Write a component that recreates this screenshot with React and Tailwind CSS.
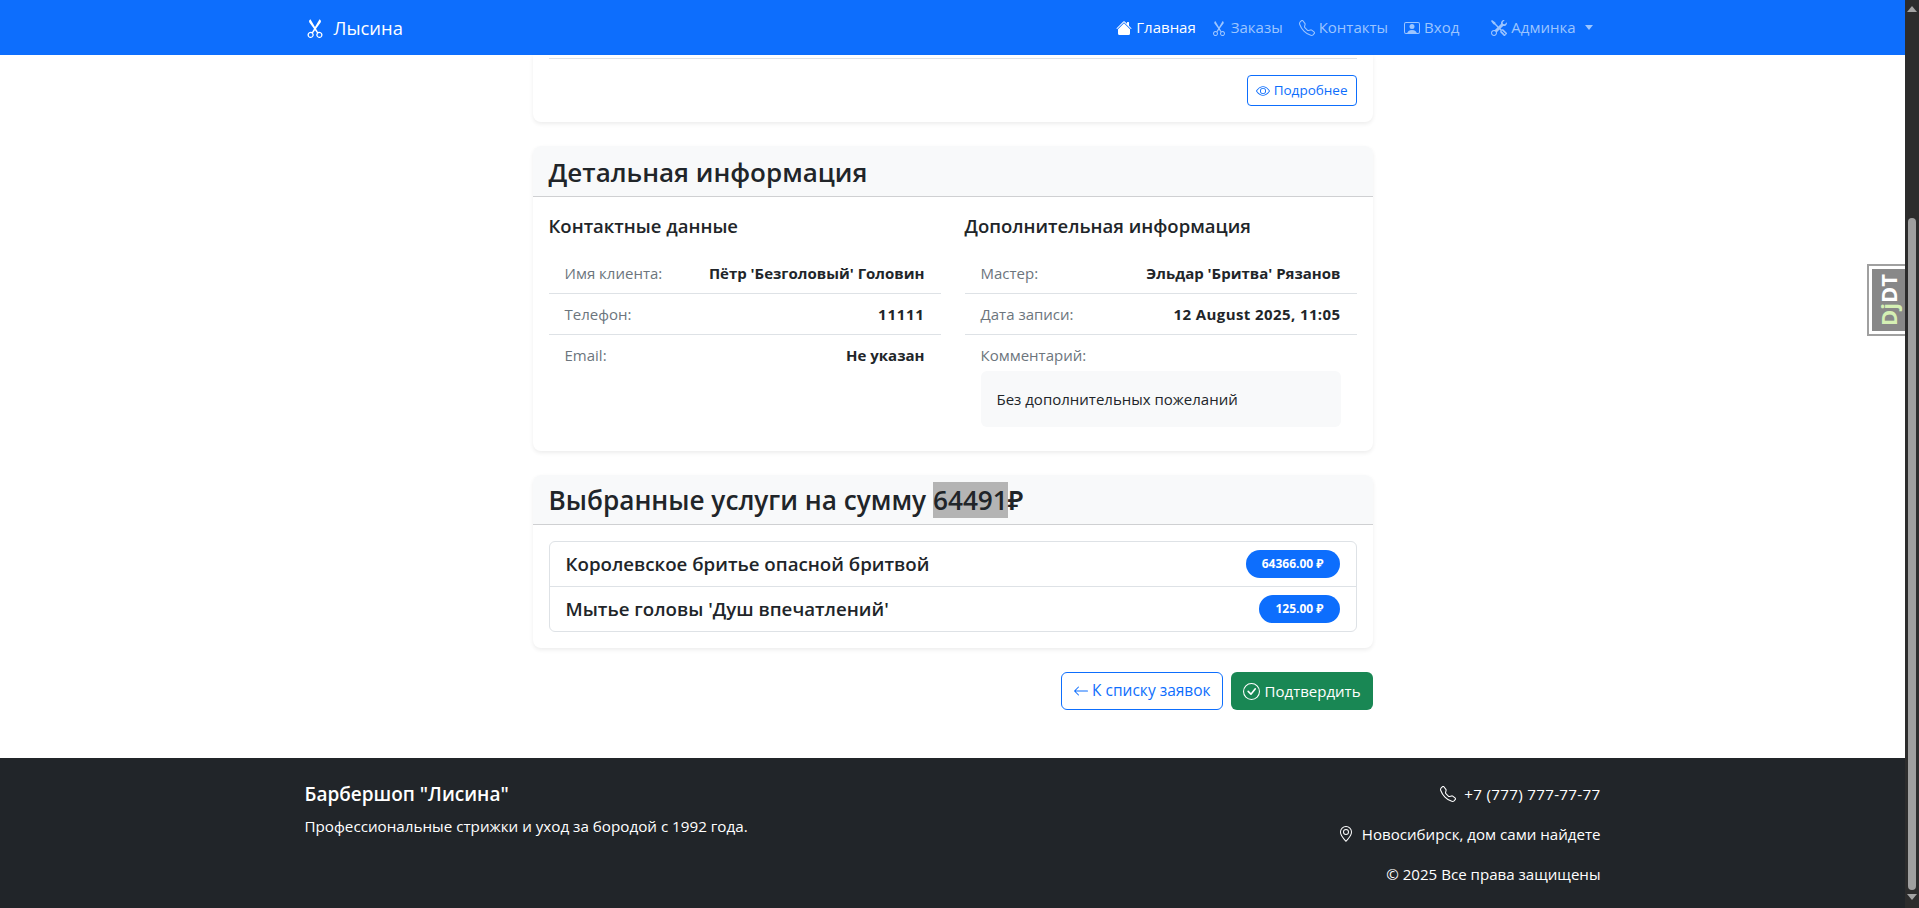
import React from 'react';
import { BsScissors, BsHouseFill, BsTelephone, BsPersonVideo, BsTools, BsEye, BsArrowLeft, BsCheckCircle, BsGeoAlt } from 'react-icons/bs';

const font = { fontFamily: '"Open Sans", "Noto Sans", sans-serif' };

function NavItem({ icon: Icon, label, active, className = '' }) {
  return (
    <a className={`flex items-center gap-1 px-2 text-[15px] ${active ? 'text-white' : 'text-[#9cc5ff]'} ${className}`}>
      <Icon className="w-4 h-4 shrink-0" />
      <span>{label}</span>
    </a>
  );
}

function InfoRow({ label, value, valueClass = '' }) {
  return (
    <div className="flex justify-between items-center px-4 py-2 border-b border-[#dee2e6] last:border-b-0 text-[15px] leading-6">
      <span className="text-[#6c757d]">{label}</span>
      <strong className={`font-bold text-[#212529] ${valueClass}`}>{value}</strong>
    </div>
  );
}

function ServiceRow({ name, price }) {
  return (
    <div className="flex justify-between items-center px-4 py-2 border-b border-[#dee2e6] last:border-b-0">
      <h5 className="text-[18.7px] leading-6 font-semibold text-[#212529]">{name}</h5>
      <span className="h-7 flex items-center px-4 rounded-full bg-[#0d6efd] text-white text-xs font-bold">{price}</span>
    </div>
  );
}

function Card({ title, headerClass, titleClass, children }) {
  return (
    <section className="rounded-lg bg-white shadow-[0_2px_4px_rgba(0,0,0,0.075)]">
      <div className={`${headerClass} px-4 flex items-center bg-[#f8f9fa] border-b border-[#cfd0d2] rounded-t-lg`}>
        <h3 className={`${titleClass} leading-9 font-semibold text-[#212529]`}>{title}</h3>
      </div>
      {children}
    </section>
  );
}

export default function App() {
  return (
    <div className="relative h-screen flex overflow-hidden bg-white text-[#212529]" style={font}>
      <div className="flex-1 min-w-0 flex flex-col">
        <nav className="h-[55px] shrink-0 bg-[#0d6efd]">
          <div className="w-[1296px] h-full mx-auto flex items-center justify-between">
            <a className="flex items-center gap-[9px] text-white text-[18.4px] pt-px">
              <BsScissors className="w-5 h-5" />
              <span>Лысина</span>
            </a>
            <div className="flex items-center">
              <NavItem icon={BsHouseFill} label="Главная" active className="!pr-[7px]" />
              <NavItem icon={BsScissors} label="Заказы" />
              <NavItem icon={BsTelephone} label="Контакты" />
              <NavItem icon={BsPersonVideo} label="Вход" />
              <div className="ml-4 flex items-center px-2 text-[#9cc5ff]">
                <NavItem icon={BsTools} label="Админка" className="!px-0" />
                <span className="ml-[9px] w-0 h-0 border-x-[4px] border-x-transparent border-t-[5px] border-t-[#9cc5ff]"></span>
              </div>
            </div>
          </div>
        </nav>

        <main className="flex-1 w-[840px] mx-auto">
          <section className="h-[67px] rounded-b-lg bg-white shadow-[0_2px_4px_rgba(0,0,0,0.075)] px-4 pt-[3px]">
            <div className="h-px bg-[#dee2e6]"></div>
            <div className="flex justify-end pt-4">
              <a className="h-[31px] px-2 flex items-center gap-1 rounded border border-[#0d6efd] text-[#0d6efd] text-[13.5px]">
                <BsEye className="w-[14px] h-[14px]" />
                Подробнее
              </a>
            </div>
          </section>

          <div className="mt-6">
            <Card title="Детальная информация" headerClass="h-[51px] pt-[2px]" titleClass="text-[26px]">
              <div className="grid grid-cols-2 gap-6 p-4">
                <div>
                  <h5 className="text-[18.5px] leading-6 font-semibold pt-px mb-[15px]">Контактные данные</h5>
                  <InfoRow label="Имя клиента:" value="Пётр 'Безголовый' Головин" />
                  <InfoRow label="Телефон:" value="11111" valueClass="tracking-[0.7px]" />
                  <InfoRow label="Email:" value="Не указан" />
                </div>
                <div>
                  <h5 className="text-[18.5px] leading-6 font-semibold pt-px mb-[15px]">Дополнительная информация</h5>
                  <InfoRow label="Мастер:" value="Эльдар 'Бритва' Рязанов" />
                  <InfoRow label="Дата записи:" value="12 August 2025, 11:05" valueClass="tracking-[0.4px]" />
                  <div className="px-4 py-2 text-[15px] leading-6">
                    <span className="text-[#6c757d]">Комментарий:</span>
                    <div className="mt-1 p-4 rounded-md bg-[#f8f9fa]">Без дополнительных пожеланий</div>
                  </div>
                </div>
              </div>
            </Card>
          </div>

          <div className="mt-6">
            <Card title={<>Выбранные услуги на сумму <span className="bg-[#b4b4b4]">64491</span>₽</>} headerClass="h-[50px] pt-px" titleClass="text-[26.2px]">
              <div className="p-4">
                <div className="rounded-md border border-[#dee2e6]">
                  <ServiceRow name="Королевское бритье опасной бритвой" price="64366.00 ₽" />
                  <ServiceRow name="Мытье головы 'Душ впечатлений'" price="125.00 ₽" />
                </div>
              </div>
            </Card>
          </div>

          <div className="mt-6 flex justify-end gap-2">
            <a className="h-[38px] px-[11px] flex items-center gap-[3px] rounded-md border border-[#0d6efd] text-[#0d6efd] text-[15.5px]">
              <BsArrowLeft className="w-4 h-4" />
              К списку заявок
            </a>
            <a className="h-[38px] px-3 flex items-center gap-[5px] rounded-md bg-[#198754] text-white text-[15px]">
              <BsCheckCircle className="w-[17px] h-[17px]" />
              Подтвердить
            </a>
          </div>
        </main>

        <footer className="h-[150px] shrink-0 bg-[#212529] text-white text-[15.2px]">
          <div className="w-[1296px] h-full mx-auto flex justify-between pt-6">
            <div>
              <h5 className="text-[19px] leading-6 font-semibold mb-2">Барбершоп "Лисина"</h5>
              <p className="leading-6">Профессиональные стрижки и уход за бородой с 1992 года.</p>
            </div>
            <div className="flex flex-col items-end gap-4 leading-6">
              <div className="flex items-center gap-2 tracking-[0.3px]"><BsTelephone className="w-4 h-4" /> +7 (777) 777-77-77</div>
              <div className="flex items-center gap-2 text-[15.1px]"><BsGeoAlt className="w-4 h-4" /> Новосибирск, дом сами найдете</div>
              <div className="text-[15.1px]">© 2025 Все права защищены</div>
            </div>
          </div>
        </footer>
      </div>

      {/* scrollbar */}
      <div className="w-[14px] shrink-0 flex flex-col items-center bg-[#2c2c2c]">
        <span className="mt-[6px] w-0 h-0 border-x-[5px] border-x-transparent border-b-[6px] border-b-[#a3a3a3]"></span>
        <div className="mt-[206px] w-2 h-[672px] rounded-full bg-[#9f9f9f]"></div>
        <span className="mt-[4px] w-0 h-0 border-x-[5px] border-x-transparent border-t-[6px] border-t-[#a3a3a3]"></span>
      </div>

      {/* debug toolbar handle */}
      <div className="absolute right-[14px] top-[264px] w-[38px] h-[72px] bg-white border-2 border-r-0 border-[#a0a0a0] py-[3px] pl-[3px]">
        <div className="h-full bg-[#888888] flex items-center justify-center">
          <span className="-rotate-90 whitespace-nowrap font-bold text-[22px] leading-none text-white">
            <span className="text-[#d5f0b4]">Dj</span>DT
          </span>
        </div>
      </div>
    </div>
  );
}
